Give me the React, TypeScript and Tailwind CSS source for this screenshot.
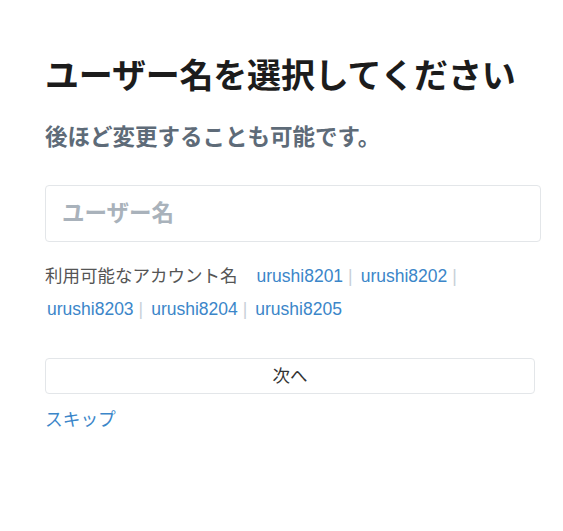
import React from "react";

const names = ["urushi8201", "urushi8202", "urushi8203", "urushi8204", "urushi8205"];

export default function App() {
  return (
    <div
      className="min-h-[531px] w-[563px] overflow-hidden bg-white"
      style={{ fontFamily: '"Liberation Sans", "Noto Sans CJK JP", sans-serif' }}
    >
      <div className="pl-[45px] pt-[52px] w-[541px]">
        <h1 className="text-[34px] leading-[48px] font-bold text-[#1c1c1c] whitespace-nowrap tracking-[-0.2px]">
          ユーザー名を選択してください
        </h1>
        <p className="mt-[23px] text-[22.5px] leading-[30px] font-bold text-[#5e6b78] whitespace-nowrap">
          後ほど変更することも可能です。
        </p>
        <div className="relative mt-[32px]">
          <input
            className="w-[496px] h-[57px] rounded-[4px] border border-[#e3e6e9] px-[16px] text-[22.5px] font-bold text-[#333] placeholder:text-[#a9b2bb] outline-none"
            placeholder="ユーザー名"
          />
          <span className="absolute left-[516px] top-[14px] text-[18px] font-bold text-[#e8436e]">
            ※
          </span>
        </div>
        <div className="mt-[18px] flex flex-wrap items-center text-[17.5px] leading-[33px] w-[496px]">
          <span className="text-[#555] mr-[17px]">利用可能なアカウント名</span>
          {names.map((n, i) => (
            <span key={n} className="flex items-center">
              <a className="px-[2px] text-[#3b86c9] cursor-pointer">{n}</a>
              {i < names.length - 1 && (
                <span className="ml-[3px] mr-[6px] text-[#c8d0d8]">|</span>
              )}
            </span>
          ))}
        </div>
        <button className="mt-[32px] w-[490px] h-[36px] rounded-[4px] border border-[#e3e6e9] bg-white text-[17.5px] text-[#333]">
          次へ
        </button>
        <div className="mt-[13px] text-[17.7px] leading-[26px] text-[#3b86c9]">スキップ</div>
      </div>
    </div>
  );
}
